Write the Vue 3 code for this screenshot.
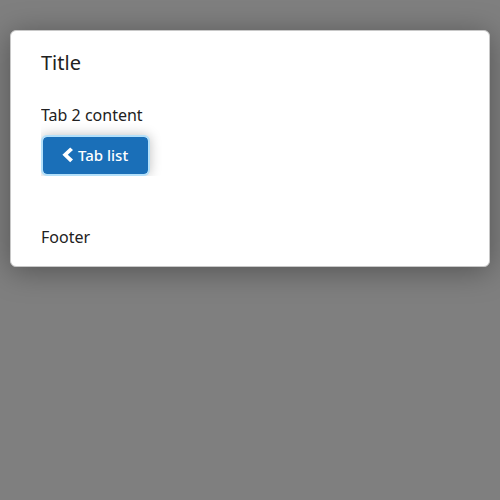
<script setup>
import { ref } from 'vue'

const activeTab = ref(2)
</script>

<template>
  <div class="backdrop">
    <section class="modal" role="dialog" aria-modal="true" aria-labelledby="modal-title">
      <header>
        <h1 id="modal-title" class="title">Title</h1>
      </header>
      <div class="panel">
        <p class="text">Tab {{ activeTab }} content</p>
        <button class="button" type="button">
          <svg class="chevron" viewBox="0 0 12 16" aria-hidden="true">
            <path d="M8.2 0.4 11 3 5.8 7.8l5.2 4.8-2.8 2.6L0.4 7.8z" fill="currentColor" />
          </svg>
          <span>Tab list</span>
        </button>
      </div>
      <footer class="footer">Footer</footer>
    </section>
  </div>
</template>

<style>
body {
  background: #7f7f7f;
}
</style>

<style scoped>
.backdrop {
  box-sizing: border-box;
  min-height: 100vh;
  padding: 30px 10px;
  overflow: hidden;
  background: #7f7f7f;
  color: #212121;
  font-family: "Noto Sans", "Open Sans", sans-serif;
  font-size: 16px;
  line-height: 24px;
}

.modal {
  padding: 20px 30px 17px;
  border: 1px solid #c8c8c8;
  border-radius: 6px;
  background: #fff;
  box-shadow: 0 4px 30px rgba(0, 0, 0, 0.35);
}

.title {
  margin: 0;
  font-size: 20px;
  font-weight: 400;
}

.panel {
  margin-top: 28px;
  overflow: hidden;
}

.text {
  margin: 0;
}

.button {
  display: flex;
  align-items: center;
  gap: 4px;
  height: 41px;
  margin-top: 8px;
  padding: 0 20px 2px 19px;
  border: 2px solid #b3e0fa;
  border-radius: 6px;
  background: #1a6fb8;
  background-clip: padding-box;
  box-shadow: 0 0 12px rgba(0, 0, 0, 0.25);
  color: #fff;
  font: 500 15px/20px "Noto Sans", "Open Sans", sans-serif;
}

.chevron {
  width: 12px;
  height: 16px;
}

.footer {
  margin-top: 49px;
}
</style>
